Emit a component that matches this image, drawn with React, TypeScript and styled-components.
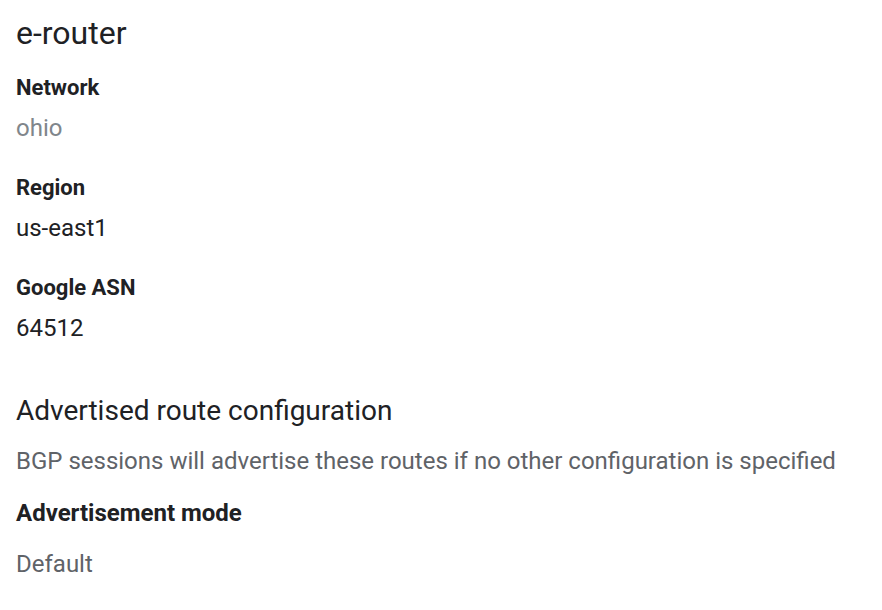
import React from "react";
import styled, { createGlobalStyle } from "styled-components";

const Global = createGlobalStyle`
  html, body { margin: 0; padding: 0; background: #fff; }
  body { font-family: Roboto, "Noto Sans", Arial, sans-serif; color: #202124; }
`;

const Page = styled.div`
  padding: 13px 16px 0;
  display: flex;
  flex-direction: column;
`;

const Title = styled.h1`
  margin: 0 0 21px;
  font-size: 32px;
  font-weight: 400;
  line-height: 40px;
  color: #202124;
`;

const Field = styled.div<{ $gap?: number }>`
  display: flex;
  flex-direction: column;
  margin-bottom: ${(p) => p.$gap ?? 30}px;
`;

const Label = styled.div<{ $size?: number }>`
  font-size: ${(p) => p.$size ?? 22}px;
  font-weight: 700;
  line-height: 28px;
  color: #202124;
`;

const Value = styled.div<{ $tone?: "dark" | "muted" | "light"; $space?: number }>`
  margin-top: ${(p) => p.$space ?? 10}px;
  font-size: 24px;
  line-height: 32px;
  color: ${(p) =>
    p.$tone === "light" ? "#80868b" : p.$tone === "muted" ? "#5f6368" : "#202124"};
`;

const Section = styled.h2`
  margin: 19px 0 0;
  font-size: 28px;
  font-weight: 400;
  line-height: 36px;
  color: #202124;
`;

const Description = styled.p`
  margin: 16px 0 22px;
  font-size: 24px;
  line-height: 32px;
  color: #5f6368;
`;

export default function App() {
  return (
    <>
      <Global />
      <Page>
        <Title>e-router</Title>
        <Field>
          <Label>Network</Label>
          <Value $tone="light">ohio</Value>
        </Field>
        <Field>
          <Label>Region</Label>
          <Value>us-east1</Value>
        </Field>
        <Field>
          <Label>Google ASN</Label>
          <Value>64512</Value>
        </Field>
        <Section>Advertised route configuration</Section>
        <Description>
          BGP sessions will advertise these routes if no other configuration is specified
        </Description>
        <Field>
          <Label $size={24}>Advertisement mode</Label>
          <Value $tone="muted" $space={21}>Default</Value>
        </Field>
      </Page>
    </>
  );
}
